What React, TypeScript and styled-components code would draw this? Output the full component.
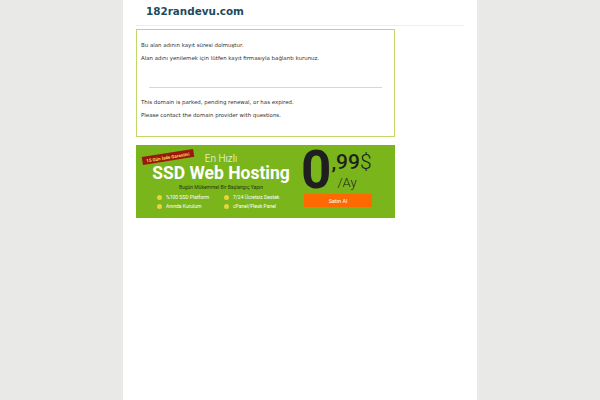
import React from 'react';
import styled, { createGlobalStyle } from 'styled-components';

const Global = createGlobalStyle`
  html, body {
    margin: 0;
    padding: 0;
    background: #e9e9e7;
  }
  body {
    font-family: "DejaVu Sans", Verdana, sans-serif;
  }
`;

const Page = styled.div`
  width: 354px;
  min-height: 400px;
  margin: 0 auto;
  background: #fff;
  padding: 0 13px;
  box-sizing: border-box;
`;

const Header = styled.div`
  height: 26px;
  border-bottom: 1px solid #eeeeee;
  padding: 0 0 4px 10px;
  box-sizing: border-box;
  display: flex;
  align-items: center;
`;

const SiteName = styled.h1`
  margin: 0;
  font-size: 10.4px;
  font-weight: bold;
  color: #1d4b5c;
`;

const NoticeBox = styled.div`
  width: 259px;
  height: 108px;
  margin-top: 3px;
  border: 1px solid #c3d86b;
  box-sizing: border-box;
  padding: 12px 4px 0 4px;
`;

const Line = styled.p`
  margin: 0 0 6px 0;
  font-size: 5.45px;
  line-height: 7px;
  color: #333;
`;

const Divider = styled.hr`
  margin: 25px 8px 11px 8px;
  border: 0;
  height: 1px;
  background: #d6d6d6;
`;

const Banner = styled.div`
  position: relative;
  width: 259px;
  height: 73px;
  margin-top: 8px;
  background: #7ab51c;
  display: flex;
  font-family: Roboto, "Liberation Sans", sans-serif;
`;

const Ribbon = styled.div`
  position: absolute;
  left: 6px;
  top: 8px;
  background: #9a180f;
  color: #ffd94a;
  font-size: 4.5px;
  font-weight: bold;
  padding: 1.5px 4px;
  transform: rotate(-9deg);
  white-space: nowrap;
`;

const LeftCol = styled.div`
  width: 170px;
  display: flex;
  flex-direction: column;
  align-items: center;
  padding-top: 8px;
`;

const Small = styled.div`
  font-size: 10px;
  font-weight: 300;
  color: #fff;
  line-height: 11px;
`;

const Title = styled.div`
  font-size: 17.5px;
  font-weight: bold;
  color: #fff;
  line-height: 19px;
`;

const Slogan = styled.div`
  font-size: 5px;
  color: #1f3a0c;
  margin-top: 1px;
`;

const Features = styled.div`
  display: grid;
  grid-template-columns: 67px 67px;
  row-gap: 2px;
  margin-top: 4px;
  margin-left: 6px;
`;

const Feature = styled.div`
  display: flex;
  align-items: center;
  gap: 4px;
  font-size: 5px;
  color: #fff;
  line-height: 7px;
`;

const Dot = styled.span`
  width: 5px;
  height: 5px;
  border-radius: 50%;
  background: #e6d43a;
`;

const RightCol = styled.div`
  display: flex;
  flex-direction: column;
  margin-left: -5px;
  padding-top: 3px;
`;

const PriceRow = styled.div`
  display: flex;
  align-items: flex-start;
  color: #1f1f1f;
`;

const Big = styled.span`
  font-size: 53px;
  font-weight: bold;
  line-height: 62px;
  margin: -9px 0;
`;

const Cents = styled.div`
  display: flex;
  flex-direction: column;
  margin-top: 4px;
`;

const CentsNum = styled.span`
  font-size: 21px;
  font-weight: 500;
  line-height: 20px;
  white-space: nowrap;
`;

const Dollar = styled.span`
  font-weight: 300;
`;

const Per = styled.span`
  font-size: 13px;
  font-weight: 300;
  line-height: 13px;
  margin-top: 4px;
  margin-left: 6px;
`;

const BuyButton = styled.div`
  width: 68px;
  height: 13px;
  margin-top: 2px;
  margin-left: 3px;
  background: #ff6a00;
  color: #fff;
  font-size: 5.5px;
  display: flex;
  align-items: center;
  justify-content: center;
`;

export default function App() {
  return (
    <>
      <Global />
      <Page>
        <Header>
          <SiteName>182randevu.com</SiteName>
        </Header>
        <NoticeBox>
          <Line>Bu alan adının kayıt süresi dolmuştur.</Line>
          <Line>Alan adını yenilemek için lütfen kayıt firmasıyla bağlantı kurunuz.</Line>
          <Divider />
          <Line>This domain is parked, pending renewal, or has expired.</Line>
          <Line>Please contact the domain provider with questions.</Line>
        </NoticeBox>
        <Banner>
          <Ribbon>15 Gün İade Garantisi</Ribbon>
          <LeftCol>
            <Small>En Hızlı</Small>
            <Title>SSD Web Hosting</Title>
            <Slogan>Bugün Mükemmel Bir Başlangıç Yapın</Slogan>
            <Features>
              <Feature><Dot />%100 SSD Platform</Feature>
              <Feature><Dot />7/24 Ücretsiz Destek</Feature>
              <Feature><Dot />Anında Kurulum</Feature>
              <Feature><Dot />cPanel/Plesk Panel</Feature>
            </Features>
          </LeftCol>
          <RightCol>
            <PriceRow>
              <Big>0</Big>
              <Cents>
                <CentsNum>,99<Dollar>$</Dollar></CentsNum>
                <Per>/Ay</Per>
              </Cents>
            </PriceRow>
            <BuyButton>Satın Al</BuyButton>
          </RightCol>
        </Banner>
      </Page>
    </>
  );
}
